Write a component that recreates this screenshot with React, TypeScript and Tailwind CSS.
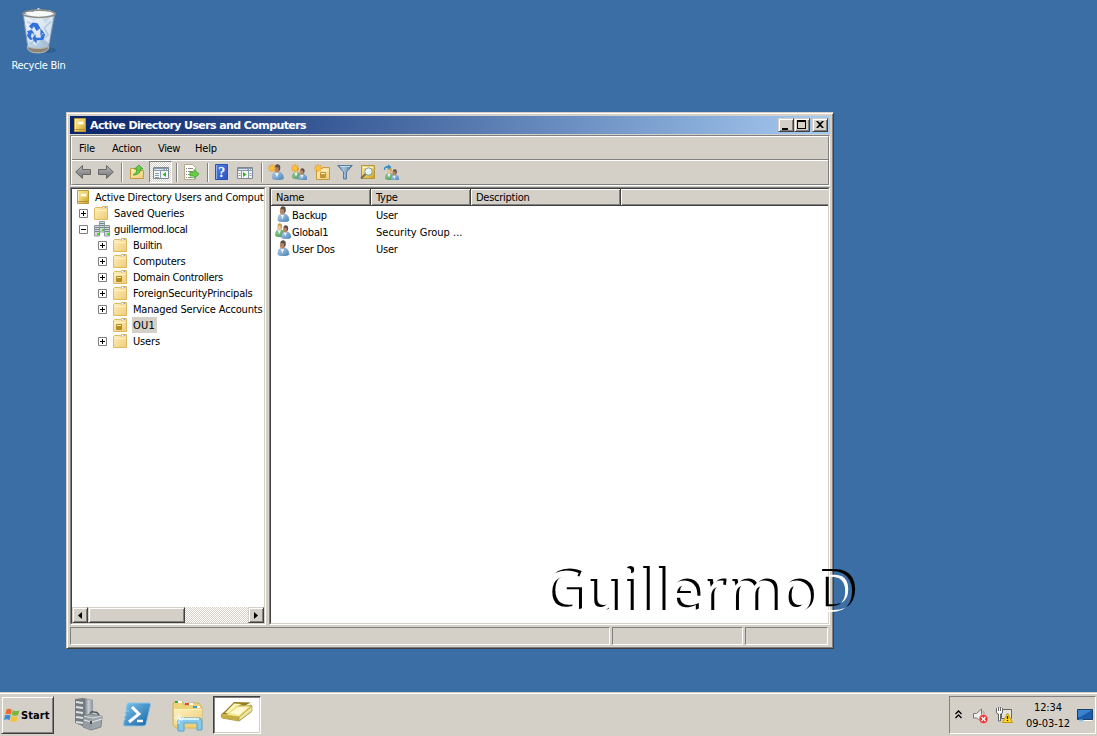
import type { ReactNode } from "react";

const raised =
  "bg-[#d4d0c8] border border-t-[#d4d0c8] border-l-[#d4d0c8] border-r-[#404040] border-b-[#404040] shadow-[inset_1px_1px_0_#fff,inset_-1px_-1px_0_#808080]";
const etched =
  "border border-t-[#808080] border-l-[#808080] border-r-white border-b-white";

function Icon({ size = 16, w, h, className = "", children, vb }: { size?: number; w?: number; h?: number; className?: string; children: ReactNode; vb?: string }) {
  const ww = w ?? size;
  const hh = h ?? size;
  return (
    <svg width={ww} height={hh} viewBox={vb ?? `0 0 ${ww} ${hh}`} className={`shrink-0 ${className}`}>
      {children}
    </svg>
  );
}

function Defs() {
  return (
    <svg width="0" height="0" className="absolute">
      <defs>
        <linearGradient id="fold" x2="1" y2="1"><stop stopColor="#fff0bd" /><stop offset="1" stopColor="#efcb76" /></linearGradient>
        <linearGradient id="book" x2="1" y2="1"><stop stopColor="#f6e48e" /><stop offset=".5" stopColor="#ecd067" /><stop offset="1" stopColor="#c79a24" /></linearGradient>
        <linearGradient id="blue" x2="1" y2="1"><stop stopColor="#b4d4ef" /><stop offset="1" stopColor="#4581b8" /></linearGradient>
        <linearGradient id="green" x2="1" y2="1"><stop stopColor="#a6dba0" /><stop offset="1" stopColor="#388e4c" /></linearGradient>
        <linearGradient id="gray" y2="1" x2="0"><stop stopColor="#b9b9b9" /><stop offset="1" stopColor="#707070" /></linearGradient>
        <linearGradient id="funnel" x2="1"><stop stopColor="#567e9e" /><stop offset=".4" stopColor="#a8c6dc" /><stop offset="1" stopColor="#41668a" /></linearGradient>
        <linearGradient id="help" x2="1" y2="1"><stop stopColor="#5282e4" /><stop offset="1" stopColor="#2a50c0" /></linearGradient>
        <linearGradient id="ps" x2="1" y2="1"><stop stopColor="#7cc6ee" /><stop offset="1" stopColor="#1560a0" /></linearGradient>
        <linearGradient id="steel" x2="1"><stop stopColor="#687078" /><stop offset=".5" stopColor="#c6ccd0" /><stop offset="1" stopColor="#8b9298" /></linearGradient>
        <linearGradient id="bin" x2="1" y2="1"><stop stopColor="#e9f1f8" /><stop offset=".5" stopColor="#c2d5e7" /><stop offset="1" stopColor="#8daecb" /></linearGradient>
        <filter id="emboss" x="-5%" y="-5%" width="110%" height="110%" colorInterpolationFilters="sRGB">
          <feOffset in="SourceAlpha" dx="-3" dy="2" result="low" />
          <feComposite in="SourceAlpha" in2="low" operator="out" result="dark" />
          <feComposite in="low" in2="SourceAlpha" operator="out" result="edge" />
          <feFlood floodColor="#fff" />
          <feComposite in2="edge" operator="in" result="light" />
          <feMerge result="both"><feMergeNode in="light" /><feMergeNode in="dark" /></feMerge>
          <feGaussianBlur in="both" stdDeviation=".45" />
        </filter>
      </defs>
    </svg>
  );
}

const Book = ({ className = "" }: { className?: string }) => (
  <Icon className={className}>
    <path d="M2.5 1.5h11v13h-11z" fill="url(#book)" stroke="#bd9a3c" />
    <path d="M3.500 2v12" stroke="#fdf3b8" />
    <path d="M3 12.500h10" stroke="#b8923a" />
    <path d="M5.500 4.500h6v3h-6z" fill="#fffdf0" stroke="#f0dc8c" />
  </Icon>
);

const Folder = ({ ou = false, className = "" }: { ou?: boolean; className?: string }) => (
  <Icon className={className}>
    <path d="M1.500 14.500v-11l1-1h6l1 1v-2h5v13z" fill="url(#fold)" stroke="#dfb962" />
    <path d="M10 2.500h4" stroke="#fff" />
    <path d="M11.500 2.500h2" stroke="#74a7cf" />
    <path d="M2.500 5.500h11" stroke="#fff4c4" />
    {ou && <g><path d="M4.500 7.500h5v5h-5z" fill="#fbe382" stroke="#b18a2c" /><path d="M5 9h4v3H5z" fill="#b98c1c" /><path d="M5 8.500h4" stroke="#fff3b0" /></g>}
  </Icon>
);

const Domain = () => (
  <Icon>
    {[[5, 0], [0, 4], [10, 4]].map(([x, y], i) => (
      <g key={i} transform={`translate(${x} ${y})`}>
        <path d="M.5.5h5v10.500h-5z" fill="#d0d8dc" stroke="#8b999f" />
        <path d="M1 2.500h4M1 4.500h4M1 6.500h4" stroke="#76868e" />
        <path d="M3 8h2v2H3z" fill="#3fe018" />
      </g>
    ))}
  </Icon>
);

function Person({ x = 0, y = 0, s = 1, green = false }: { x?: number; y?: number; s?: number; green?: boolean }) {
  return (
    <g transform={`translate(${x} ${y}) scale(${s})`}>
      <path d="M0 14.200C0 9.800 1.400 7.800 5 7.800s6 2.500 6 6.400c0 2.400-11 2.400-11 0z" fill={green ? "url(#green)" : "url(#blue)"} stroke={green ? "#458a55" : "#6f95b8"} strokeWidth=".6" />
      <path d="M2.500 8.500l2 5 1.700-5z" fill="#edf5fb" />
      <ellipse cx="4.500" cy="5" rx="2.600" ry="3.800" fill={green ? "#e8c49a" : "#b88462"} />
      <path d="M2.500 3C2.500 1 3.500.1 5.200.2 7.600.4 8.400 2.400 7.500 6L6.200 7 6 3.400z" fill={green ? "#c8a046" : "#5d5048"} />
    </g>
  );
}

const Star = () => (
  <path d="M4 0l.8 2.4L7 1.2 6 3.4l2 1-2.2.6L7 7.2 4.8 6 4 8 3.2 6 1 7.2 2 5 0 4.2l2-.8L1 1.2l2.2 1.2z" fill="#ffc63a" stroke="#ee9418" strokeWidth=".5" />
);

const User = ({ className = "" }: { className?: string }) => <Icon className={className}><Person x={3} y={0} /></Icon>;
const Group = ({ className = "" }: { className?: string }) => (
  <Icon className={className}><Person green x={0.5} y={0} s={.86} /><Person x={6.5} y={2} s={.86} /></Icon>
);

const Nav = ({ flip = false, className = "" }: { flip?: boolean; className?: string }) => (
  <Icon className={className}>
    <path transform={flip ? "translate(16 0) scale(-1 1)" : undefined} d="M.7 8L7.500 1.500v4h8v5h-8v4z" fill="url(#gray)" stroke="#666" />
  </Icon>
);

const PaneIcon = ({ left = false, className = "" }: { left?: boolean; className?: string }) => (
  <Icon className={className}>
    <path d="M.5 2.500h15v11H.5z" fill="#f4f5f5" stroke="#7d8a96" />
    <path d="M1 3h14v3H1z" fill="#8799aa" />
    <path d="M1.500 4.500h9" stroke="#dbe5ec" />
    <path d="M12 4.500h1m1 0h1" stroke="#fff" />
    <path d={left ? "M7.500 6v7M2 8.500h4M2 10.500h4M2 12.500h4" : "M4.500 6v7M11.500 6v7M1.500 8.500h2M1.500 10.500h2M12.500 8.500h2M12.500 10.500h2"} stroke="#899bad" />
    <path d={left ? "M13 7v5L9.500 9.500z" : "M6 7v5l3.700-2.500z"} fill="#35b51d" />
  </Icon>
);

const Sep = ({ className = "" }: { className?: string }) => (
  <div className={`h-[19px] w-[2px] shrink-0 border-l border-r border-l-[#808080] border-r-white ${className}`} />
);

function Toolbar() {
  return (
    <div className="flex h-[22px] items-center pl-[3px]">
      <Nav /><Nav flip className="ml-[7px]" />
      <Sep className="ml-[7px]" />
      <Icon className="ml-[6px]">
        <path d="M1.500 14.500v-10h5l1 2h7v8z" fill="url(#fold)" stroke="#c99a3b" />
        <path d="M4 11c2-1 4-3 4-6H5.500L10 1l4 4h-2.500c0 4-3 6-7.500 6z" fill="#61cf42" stroke="#2d9720" strokeWidth=".7" />
      </Icon>
      <div className="ml-[4px] flex h-[22px] w-[23px] items-center justify-center border border-t-[#808080] border-l-[#808080] border-r-white border-b-white bg-[repeating-conic-gradient(#fff_0_25%,#d4d0c8_0_50%)] bg-[length:2px_2px]">
        <PaneIcon left className="mt-[2px] ml-[1px]" />
      </div>
      <Sep className="ml-[4px]" />
      <Icon className="ml-[5px]">
        <path d="M1.500.5h8l3 3v12h-11z" fill="#fffef5" stroke="#b3aa8e" />
        <path d="M3 4.500h1m1 0h5M3 7.500h1m1 0h5M3 10.500h1m1 0h3M3 13.500h1m1 0h5" stroke="#8a8a8a" />
        <path d="M7 8h4V5.500L16 10l-5 4.500V12H7z" fill="#66ce43" stroke="#369b29" strokeWidth=".7" />
      </Icon>
      <Sep className="ml-[8px]" />
      <Icon className="ml-[5px]">
        <path d="M1.500.5h12v15h-12z" fill="url(#help)" stroke="#2853b5" />
        <path d="M2.500 1v14" stroke="#8db0f4" />
        <text x="4.300" y="12.600" fill="white" fontFamily="Liberation Serif, serif" fontWeight="bold" fontSize="14">?</text>
      </Icon>
      <PaneIcon className="mt-[2px] ml-[7px]" />
      <Sep className="ml-[8px]" />
      <Icon className="ml-[5px]"><Person x={4.500} y={0} /><Star /></Icon>
      <Icon className="ml-[7px]"><Person green x={1.500} y={2} s={.8} /><Person x={7.500} y={4} s={.78} /><Star /></Icon>
      <Icon className="ml-[7px]">
        <path d="M2.500 15.500v-11h6v-1h7v12z" fill="url(#fold)" stroke="#c99a3b" /><path d="M3 6.500h12" stroke="#fff3bd" />
        <path d="M6.500 8.500h5v5h-5z" fill="#fff4b8" stroke="#b9923a" /><path d="M7 10h4v3H7z" fill="#c39a30" /><Star />
      </Icon>
      <Icon className="ml-[7px]">
        <path d="M.7 1.500h14.600L9.500 8v7h-3V8z" fill="url(#funnel)" stroke="#567b9c" /><path d="M3 2.500h10" fill="none" stroke="#c9deed" />
      </Icon>
      <Icon className="ml-[7px]">
        <path d="M1.500 1.500h13v13h-13z" fill="url(#book)" stroke="#b8953a" />
        <path d="M3 3.500h10" stroke="#fff7c4" />
        <path d="M5.800 9.800L1 14.500" stroke="#756b57" strokeWidth="2" /><circle cx="8.500" cy="7.500" r="3.700" fill="#e9f6f6" stroke="#7d9ba9" />
      </Icon>
      <Icon className="ml-[7px]">
        <Person green x={2.500} y={3} s={.8} /><Person x={8} y={5} s={.75} />
        <path d="M.8 6C.8 3 2.500 1.600 5 2V.2l3.500 2.800L5 5.500V3.900C3 3.600 2 4.200 2.200 6z" fill="#328bc8" />
      </Icon>
    </div>
  );
}

const Expander = ({ open = false }: { open?: boolean }) => (
  <Icon size={9}>
    <path d="M.5.500h8v8h-8z" fill="#fff" stroke="#808080" />
    <path d={open ? "M2 4.500h5" : "M2 4.500h5M4.500 2v5"} stroke="#000" />
  </Icon>
);

const nodes = [
  ["Builtin", false, "tracking-[-0.36px]"],
  ["Computers", false, "tracking-[-0.22px]"],
  ["Domain Controllers", true, "tracking-[-0.3px]"],
  ["ForeignSecurityPrincipals", false, "tracking-[-0.2px]"],
  ["Managed Service Accounts", false, "tracking-[-0.17px]"],
  ["OU1", true, "tracking-[0.2px]"],
  ["Users", false, "tracking-[-0.15px]"],
] as const;

function Tree() {
  return (
    <div className="flex w-[196px] shrink-0 flex-col border border-t-[#808080] border-l-[#808080] border-r-white border-b-white">
      <div className="flex min-h-0 flex-1 flex-col overflow-hidden border border-t-[#404040] border-l-[#404040] border-r-[#d4d0c8] border-b-[#d4d0c8] bg-white whitespace-nowrap">
        <div className="flex h-4 items-center pl-[3px]"><Book /><span className="mt-[2px] ml-[4px] tracking-[-0.17px]">Active Directory Users and Comput</span></div>
        <div className="flex h-4 items-center pl-[7px]"><Expander /><Folder className="ml-[5px]" /><span className="mt-[2px] ml-[5px] tracking-[-0.13px]">Saved Queries</span></div>
        <div className="flex h-4 items-center pl-[7px]"><Expander open /><span className="ml-[6px] flex"><Domain /></span><span className="mt-[2px] ml-[4px] tracking-[-0.34px]">guillermod.local</span></div>
        {nodes.map(([name, ou, t]) => (
          <div key={name} className="flex h-4 items-center pl-[26px]">
            <span className="w-[9px]">{name !== "OU1" && <Expander />}</span>
            <Folder ou={ou} className="ml-[5px]" />
            <span className={`ml-[4px] flex h-4 items-center pt-[2px] pr-[2px] pl-[1px] ${t} ${name === "OU1" ? "bg-[#d4d0c8]" : ""}`}>{name}</span>
          </div>
        ))}
        <div className="mt-auto flex h-4 bg-[repeating-conic-gradient(#fff_0_25%,#d4d0c8_0_50%)] bg-[length:2px_2px]">
          <div className={`flex w-4 items-center justify-center ${raised}`}><Icon w={4} h={7}><path d="M4 0v7L0 3.500z" /></Icon></div>
          <div className={`w-[97px] ${raised}`} />
          <div className={`ml-auto flex w-4 items-center justify-center ${raised}`}><Icon w={4} h={7}><path d="M0 0v7l4-3.500z" /></Icon></div>
        </div>
      </div>
    </div>
  );
}

const head =
  "flex h-[17px] items-center pl-[5px] pt-[2px] border-r border-b border-r-[#404040] border-b-[#404040] bg-[#d4d0c8] shadow-[inset_1px_1px_0_#fff,inset_-1px_-1px_0_#808080]";

const objects = [
  ["Backup", "User", ""],
  ["Global1", "Security Group ...", "tracking-[0px]"],
  ["User Dos", "User", ""],
];

function List() {
  return (
    <div className="ml-[3px] flex min-w-0 flex-1 border border-t-[#808080] border-l-[#808080] border-r-white border-b-white">
      <div className="flex-1 border border-t-[#404040] border-l-[#404040] border-r-[#d4d0c8] border-b-[#d4d0c8] bg-white">
        <div className="flex">
          <div className={`w-[100px] ${head}`}>Name</div>
          <div className={`w-[100px] ${head}`}>Type</div>
          <div className={`w-[150px] ${head}`}>Description</div>
          <div className="h-[17px] flex-1 border-b border-b-[#404040] bg-[#d4d0c8] shadow-[inset_1px_1px_0_#fff,inset_0_-1px_0_#808080]" />
        </div>
        {objects.map(([n, t, spacing], i) => (
          <div key={n} className="flex h-[17px] items-center pl-[4px]">
            {i === 1 ? <Group className="-mt-[1px]" /> : <User className="-mt-[1px]" />}
            <span className="mt-[2px] ml-[1px] w-[84px] tracking-[-0.22px]">{n}</span>
            <span className={`mt-[2px] ${spacing}`}>{t}</span>
          </div>
        ))}
      </div>
    </div>
  );
}

function AdWindow() {
  return (
    <div className="mt-[39px] ml-[66px] flex h-[537px] w-[768px] flex-col border border-t-[#d4d0c8] border-l-[#d4d0c8] border-r-[#404040] border-b-[#404040] bg-[#d4d0c8] px-[3px] pt-[3px] pb-[2px] shadow-[inset_1px_1px_0_#fff,inset_-1px_-1px_0_#808080]">
      <div className="flex h-[18px] w-[760px] shrink-0 items-center bg-linear-to-r from-[#0a246a] to-[#a6caf0] pl-[2px]">
        <Book />
        <span className="mt-[2px] ml-[2px] font-[Verdana,'DejaVu_Sans'] text-[11px] font-bold tracking-[-0.59px] whitespace-nowrap text-white">Active Directory Users and Computers</span>
        <div className="mr-[2px] ml-auto flex">
          <div className={`h-[14px] w-4 ${raised}`}><Icon w={14} h={12}><path d="M3 9h6v2H3z" /></Icon></div>
          <div className={`h-[14px] w-4 ${raised}`}><Icon w={14} h={12}><path d="M2 1h9v9H2zM3 3v6h7V3z" fillRule="evenodd" /></Icon></div>
          <div className={`ml-[2px] h-[14px] w-4 ${raised}`}><Icon w={14} h={12}><path d="M3 2h2l2 2 2-2h2L8 5.500 11 9H9L7 7 5 9H3l3-3.500z" /></Icon></div>
        </div>
      </div>
      <div className="mt-[1px] h-[51px] w-[760px] shrink-0 border border-t-[#808080] border-l-[#808080] border-r-white border-b-white">
        <div className="h-[49px] border-t border-r border-b border-l border-t-white border-r-[#808080] border-b-[#808080] border-l-white">
          <div className="flex h-[22px] items-center pt-[2px] pl-[7px]">
            <span className="w-[33px] tracking-[-0.1px]">File</span><span className="w-[46px] tracking-[-0.25px]">Action</span><span className="w-[37px] tracking-[-0.4px]">View</span><span className="tracking-[-0.2px]">Help</span>
          </div>
          <div className="border-t border-b border-t-[#808080] border-b-white" />
          <Toolbar />
        </div>
      </div>
      <div className="mt-[1px] flex h-[438px] w-[760px] shrink-0"><Tree /><List /></div>
      <div className="mt-[2px] flex h-[18px] shrink-0 gap-[2px]">
        <div className={`w-[540px] ${etched}`} /><div className={`w-[131px] ${etched}`} /><div className={`w-[83px] ${etched}`} />
      </div>
    </div>
  );
}

function RecycleBin() {
  return (
    <div className="flex h-[73px] w-[77px] flex-col items-center pt-[8px]">
      <Icon w={40} h={47} vb="0 0 41 49">
        <ellipse cx="27" cy="44" rx="12" ry="3" fill="#244f7e" opacity=".45" />
        <path d="M4 6l5 37c2 5 18 5 21 0l7-37z" fill="url(#bin)" stroke="#7895ad" />
        <path d="M6 8l9 6 6-6 6 8 8-9-4 30-7-6-7 8-8-6z" fill="#eef4fa" opacity=".6" />
        <path d="M8 14l7 4-3 6 6 8-7 6M33 14l-7 7 4 7-7 6 5 4" stroke="#9cb9d3" strokeWidth="1.800" fill="none" opacity=".6" />
        <path d="M8.300 40c4 3 18 3 22.400 0l-.7 3c-3 5-18 5-21 0z" fill="#8b8378" stroke="#bab9aa" />
        <path d="M5 5l5-2 4 1 6-4 5 3 7-1 4 4-10 4-12-1z" fill="#f7fafc" />
        <ellipse cx="20.500" cy="6" rx="17" ry="3.800" fill="none" stroke="#8c8b85" strokeWidth="1.600" />
        <g fill="#3272d8"><path d="M10 19l4-4 5 1 3 5-4 3-3-5-2 3zM8 24l5-1 3 4-3-1-1 4 3 3h-4l-3-4 1-3zM17 31v-4l-4 5 5 5v-3l7-1 2-6-3-1-2 5zM22 21l4 5-4 3z" /></g>
      </Icon>
      <span className="mt-[4px] tracking-[-0.26px] text-white">Recycle Bin</span>
    </div>
  );
}

function Watermark() {
  return (
    <div className="pointer-events-none absolute top-[550px] left-[545px] font-['Open_Sans',sans-serif] text-[57px] leading-[76px] font-semibold tracking-[0px] text-black [filter:url(#emboss)]">
      GuillermoD
    </div>
  );
}

function Taskbar() {
  return (
    <div className="flex h-[44px] shrink-0 border-t border-[#d4d0c8] bg-[#d4d0c8] shadow-[inset_0_1px_0_#fff]">
      <div className={`mt-[3px] ml-[1px] flex h-[38px] w-[53px] items-center pl-[2px] ${raised}`}>
        <Icon w={16} h={16}>
          <path d="M2.500 2.500Q5 1 7.800 2.700L6.800 7.500Q4 6 1.300 7.300z" fill="#ec6a2d" />
          <path d="M8.800 3.200Q12 5 15.300 3.200L14.200 8Q11 9.500 7.700 8z" fill="#78b739" />
          <path d="M1 8.300Q4 7 6.600 8.500l-1 4.800Q3 11.500 0 13z" fill="#438bd1" />
          <path d="M7.500 9Q11 10.500 14 9l-1 4.800Q9.500 15.500 6.500 14z" fill="#f6c42c" />
        </Icon>
        <span className="mt-[2px] ml-[1px] text-[11px] font-bold tracking-[0.1px]">Start</span>
      </div>
      <Icon w={32} h={34} className="mt-[5px] ml-[19px]">
        <path d="M2 1l8-1 10 2v25l-8 2L2 25z" fill="#737b80" /><path d="M11 1l9 1v25h-9z" fill="url(#steel)" />
        <path d="M3 4l7 1M3 9l7 1M3 14l7 1M3 19l7 1M3 24l7 1" stroke="#dce1e2" strokeWidth="2" />
        <path d="M17 17q0-4 4-3 5 0 5 5" stroke="#4f565b" strokeWidth="1.500" fill="none" />
        <path d="M11 18l6-2 12 2-1 11-10 3-8-3z" fill="#9fa6ab" stroke="#7d868b" /><path d="M11 18l8 2v11l-9-3z" fill="#949ca1" />
        <path d="M11 22l8 2 10-3" stroke="#e5e9eb" fill="none" /><path d="M11 18l8 2 10-2" stroke="#d5dadd" fill="none" /><path d="M17 23h2v3h-2z" fill="#4c5358" />
      </Icon>
      <Icon w={32} h={28} className="mt-[8px] ml-[17px]">
        <path d="M7 2h20q2 0 1.500 2L24 23q-.5 2-3 2H3q-2 0-1.500-2L5 4q.5-2 2-2z" fill="url(#ps)" stroke="#8cc4e4" />
        <path d="M10 6l7 7-10 8" fill="none" stroke="#fff" strokeWidth="3" /><path d="M15 20h6" stroke="#fff" strokeWidth="2.500" />
        <path d="M1 10h6M0 14h5M1 18h3" stroke="#d4e7f2" opacity=".5" />
      </Icon>
      <Icon w={33} h={33} className="mt-[7px] ml-[17px]">
        <path d="M2 4l1-2h9l1 3h5V3h10l3 4v18l-4 3H5l-3-3z" fill="#edd278" stroke="#d2b45a" />
        <path d="M5 2h6M14 4h8M22 7h7" stroke="#fff" strokeWidth="2" />
        <path d="M4 2h3" stroke="#37a845" strokeWidth="2" /><path d="M14 4h4" stroke="#e34b2a" strokeWidth="2" /><path d="M22 7h4" stroke="#3d9ad6" strokeWidth="2" />
        <path d="M3 9h28v15H3z" fill="url(#fold)" /><path d="M3 9.500h28" stroke="#fff4bd" />
        <path d="M7 31V20q0-2 2-2h19q3 0 3 3v9h-5v-7H13v8z" fill="#86c9ea" stroke="#5aa4cd" />
        <path d="M8 19h20" stroke="#d4f2fc" strokeWidth="2" /><path d="M8 13v11M3 18h10M5 15l6 6M11 15l-6 6" stroke="#fff" opacity=".8" />
      </Icon>
      <div className="mt-[3px] ml-[9px] flex h-[38px] w-[48px] justify-center border border-t-[#404040] border-l-[#404040] border-r-white border-b-white bg-white pt-[4px] shadow-[inset_1px_1px_0_#808080,inset_-1px_-1px_0_#d4d0c8]">
        <Icon w={34} h={24}>
          <path d="M1 14l12-4 18-6v7l-12 9L2 17z" fill="#d6c360" stroke="#93802b" strokeWidth=".7" />
          <path d="M1 14l18 2v4L2 17z" fill="#c5ad44" /><path d="M19 16L32 5v5L19 20z" fill="#eee4a0" stroke="#a08e30" strokeWidth=".6" />
          <path d="M1 13.500L15 5l17-.5L19 16z" fill="#f4e68a" stroke="#b7a141" strokeWidth=".7" />
          <path d="M10 12l9-6 9 .5-9 7.500z" fill="#fffad6" /><path d="M2 13L14 1l17 .5-6 3H16L7 13.500z" fill="#937b1c" />
          <path d="M5 12l9-9.500 8 .5-7 3-7 6.500z" fill="#fbf4b8" />
        </Icon>
      </div>
      <div className={`mt-[3px] mr-[1px] ml-auto flex h-[38px] w-[147px] items-center ${etched}`}>
        <Icon w={7} h={9} className="ml-[5px] -mt-[2px]"><path d="M.5 4l3-3 3 3M.5 8l3-3 3 3" fill="none" stroke="#000" strokeWidth="1.300" /></Icon>
        <Icon w={17} h={18} className="mt-[1px] ml-[10px]">
          <path d="M1.500 6.500h3l5-4.500v13l-5-4h-3z" fill="#eee" stroke="#777" /><path d="M11 4q2 2 1 5" fill="none" stroke="#999" />
          <circle cx="11.500" cy="12" r="4.500" fill="#dc3434" stroke="#f9b2a9" /><path d="M9.500 10l4 4m0-4l-4 4" stroke="#fff" strokeWidth="1.400" />
        </Icon>
        <Icon w={17} h={18} className="ml-[7px]">
          <path d="M5.500 3.500h10v9h-10z" fill="#e3e3df" stroke="#666" /><path d="M.5 2v4q0 2 2 2v7h2V8q2 0 2-2V2M2.500 1v4m2-4v4" fill="#fff" stroke="#666" />
          <path d="M11.500 7l5 9.500h-10z" fill="#ffd326" stroke="#c59b14" /><path d="M11.500 10v3m0 1v1" stroke="#222" strokeWidth="1.300" />
        </Icon>
        <div className="mt-[1px] ml-[8px] flex w-[54px] flex-col items-center pt-[1px] leading-4 tracking-[-0.1px]">
          <span>12:34</span><span>09-03-12</span>
        </div>
        <Icon w={16} h={14} className="mt-[2px] ml-[2px]">
          <path d="M.5.500h15v10H.5z" fill="#1b5cab" stroke="#17406d" /><path d="M1 1h14L3 8H1z" fill="#3b83cd" /><path d="M2 10.500h4v2H2z" fill="#8fc2ea" /><path d="M7 11.500h8" stroke="#fff" />
        </Icon>
      </div>
    </div>
  );
}

export default function App() {
  return (
    <div className="relative flex h-[736px] w-[1097px] flex-col overflow-hidden bg-[#3a6ea5] font-[Tahoma,'DejaVu_Sans_Condensed','DejaVu_Sans',sans-serif] text-[11px] leading-[14px] tracking-[-0.26px] text-black">
      <Defs />
      <div className="flex min-h-0 flex-1 flex-col">
        <RecycleBin />
        <AdWindow />
      </div>
      <Taskbar />
      <Watermark />
    </div>
  );
}
